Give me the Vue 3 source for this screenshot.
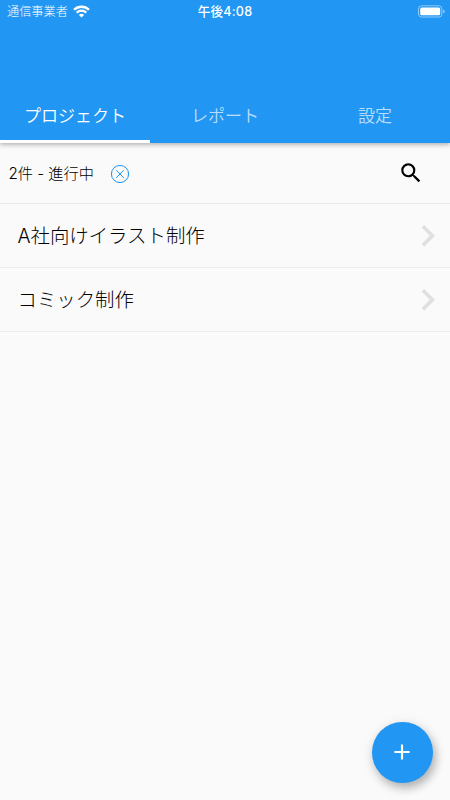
<script setup>
import { ref } from "vue";

const tabs = ["プロジェクト", "レポート", "設定"];
const activeTab = ref(0);

const filterOn = ref(true);
const projects = ref([
  { id: 1, name: "A社向けイラスト制作" },
  { id: 2, name: "コミック制作" },
]);
</script>

<template>
  <div class="app">
    <header class="header">
      <div class="status">
        <div class="carrier">
          <span>通信事業者</span>
          <svg class="wifi" viewBox="0 0 17 13">
            <path d="M1 4.8a10.7 10.7 0 0 1 15 0" />
            <path d="M3.7 7.6a6.9 6.9 0 0 1 9.6 0" />
            <path class="dot" d="M8.5 12.6 5.9 9.9a3.8 3.8 0 0 1 5.2 0z" />
          </svg>
        </div>
        <div class="time">午後4:08</div>
        <div class="power">
          <svg class="battery" viewBox="0 0 28 13">
            <rect class="case" x="1.5" y="0.8" width="23.4" height="11.2" rx="3" />
            <rect class="level" x="3.2" y="2.5" width="20" height="7.8" rx="1.6" />
            <path class="tip" d="M26.2 4.5q1.6.4 1.6 1.9t-1.6 1.9z" />
          </svg>
        </div>
      </div>
      <nav class="tabs">
        <button
          v-for="(tab, i) in tabs"
          :key="tab"
          class="tab"
          :class="{ active: activeTab === i }"
          @click="activeTab = i"
        >
          {{ tab }}
        </button>
      </nav>
    </header>

    <div class="filter">
      <span class="count">{{ projects.length }}件 - 進行中</span>
      <svg v-if="filterOn" class="clear" viewBox="0 0 20 20" @click="filterOn = false">
        <circle cx="10" cy="10" r="8.6" />
        <path d="M6.2 6.2l7.6 7.6M13.8 6.2l-7.6 7.6" />
      </svg>
      <svg class="search" viewBox="0 0 24 24">
        <path
          d="M15.5 14h-.79l-.28-.27A6.47 6.47 0 0 0 16 9.5 6.5 6.5 0 1 0 9.5 16c1.61 0 3.09-.59 4.23-1.57l.27.28v.79l5 4.99L20.49 19l-4.99-5zm-6 0C7.01 14 5 11.99 5 9.5S7.01 5 9.5 5 14 7.01 14 9.5 11.99 14 9.5 14z"
        />
      </svg>
    </div>

    <div v-for="project in projects" :key="project.id" class="project">
      <span>{{ project.name }}</span>
      <svg class="chevron" viewBox="0 0 24 24">
        <path d="M10 6L8.59 7.41 13.17 12l-4.58 4.59L10 18l6-6z" />
      </svg>
    </div>

    <button class="add">
      <svg viewBox="0 0 24 24">
        <path d="M19 13h-6v6h-2v-6H5v-2h6V5h2v6h6v2z" />
      </svg>
    </button>
  </div>
</template>

<style>
body {
  margin: 0;
  background: #fafafa;
}
</style>

<style scoped>
.app {
  position: relative;
  height: 800px;
  overflow: hidden;
  background: #fafafa;
  color: #000;
  font-family: Inter, "Noto Sans CJK JP", sans-serif;
  font-weight: 300;
}
button {
  padding: 0;
  border: 0;
  font: inherit;
}
.header {
  display: flex;
  flex-direction: column;
  justify-content: space-between;
  height: 142.6px;
  background: #2196f3;
  color: #fff;
  box-shadow: 0 2px 4px rgba(0, 0, 0, 0.22), 0 1px 8px rgba(0, 0, 0, 0.08);
}
.status {
  display: grid;
  grid-template-columns: 1fr auto 1fr;
  align-items: center;
  height: 22px;
  padding: 0 5px 0 7px;
  font-size: 12.2px;
  line-height: 22px;
}
.carrier {
  display: flex;
  align-items: center;
  gap: 5px;
}
.carrier span {
  padding-top: 2px;
  line-height: 20px;
}
.wifi {
  width: 17px;
  height: 13px;
  fill: none;
  stroke: #fff;
  stroke-width: 2.3;
}
.wifi .dot {
  fill: #fff;
  stroke: none;
}
.time {
  padding: 2px 2px 0 0;
  font-size: 12.6px;
  font-weight: 550;
  letter-spacing: 0.2px;
  line-height: 20px;
}
.power {
  display: flex;
  justify-content: flex-end;
}
.battery {
  width: 28px;
  height: 13px;
}
.case {
  fill: none;
  stroke: #90caf9;
  stroke-width: 1;
}
.level {
  fill: #fff;
}
.tip {
  fill: #90caf9;
}
.tabs {
  display: flex;
  height: 52px;
}
.tab {
  flex: 1;
  box-sizing: border-box;
  padding-bottom: 1px;
  border-bottom: 3px solid transparent;
  background: none;
  color: rgba(255, 255, 255, 0.7);
  font-size: 17px;
  font-weight: 350;
}
.tab.active {
  border-color: #fff;
  color: #fff;
}
.filter {
  display: flex;
  align-items: center;
  box-sizing: border-box;
  height: 61.4px;
  padding: 0 26px 0 8.4px;
  border-bottom: 1px solid #e9e9e9;
  font-size: 15.2px;
}
.count {
  padding-bottom: 1px;
}
.clear {
  width: 20px;
  height: 20px;
  margin: 2px 0 0 16.6px;
  fill: none;
  stroke: #2196f3;
  stroke-width: 1;
}
.search {
  width: 26px;
  height: 26px;
  margin-left: auto;
  fill: #000;
}
.project {
  display: flex;
  align-items: center;
  justify-content: space-between;
  box-sizing: border-box;
  height: 64px;
  padding: 0 1px 0 17.5px;
  border-bottom: 1px solid #ededed;
  font-size: 19.4px;
}
.project span {
  padding-bottom: 2px;
}
.chevron {
  width: 43.5px;
  height: 43.5px;
  fill: #e0e0e0;
}
.add {
  position: absolute;
  right: 17.5px;
  bottom: 17.5px;
  display: flex;
  align-items: center;
  justify-content: center;
  width: 60.5px;
  height: 60.5px;
  border-radius: 50%;
  background: #2196f3;
  box-shadow: 3px 5px 8px rgba(0, 0, 0, 0.22), 1px 3px 14px rgba(0, 0, 0, 0.12);
}
.add svg {
  width: 26px;
  height: 26px;
  fill: #fff;
}
</style>
